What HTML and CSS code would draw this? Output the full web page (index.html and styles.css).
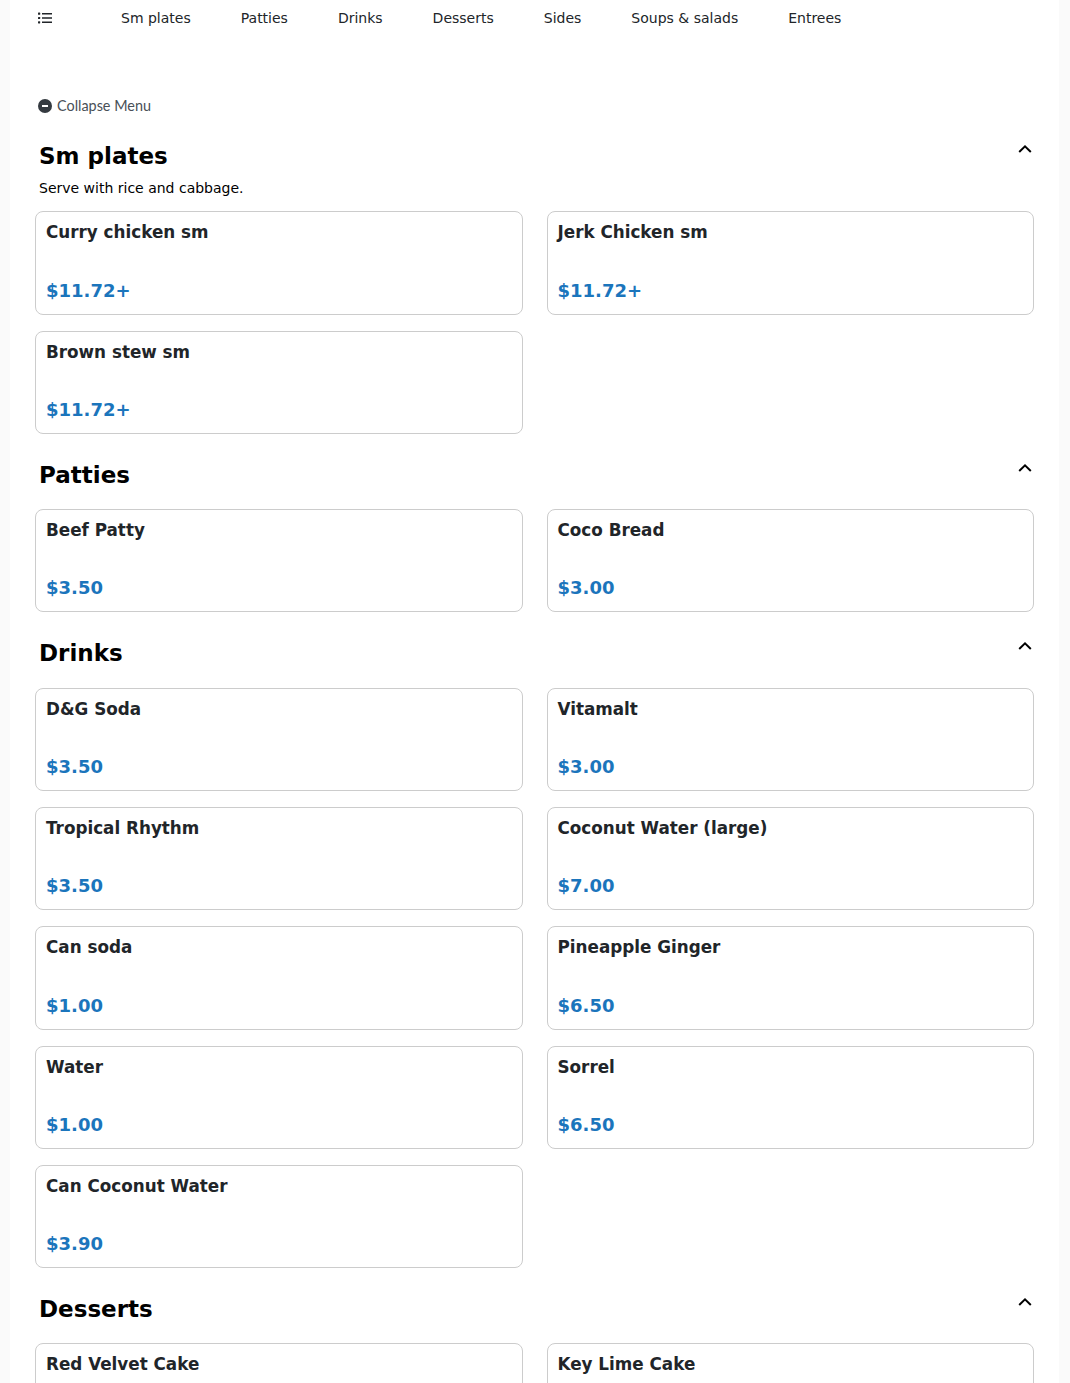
FILE: index.html
```html
<!DOCTYPE html>
<html lang="en">
<head>
<meta charset="utf-8">
<title>Menu</title>
<link rel="stylesheet" href="styles.css">
</head>
<body>
<main class="panel">
  <nav class="nav">
    <button class="nav-toggle" aria-label="Menu list">
      <svg width="14" height="12" viewBox="0 0 14 12" aria-hidden="true"><g fill="#212529"><rect x="0" y="0.6" width="2.2" height="2.2" rx=".6"/><rect x="0" y="4.9" width="2.2" height="2.2" rx=".6"/><rect x="0" y="9.2" width="2.2" height="2.2" rx=".6"/><rect x="4" y="1" width="10" height="1.5"/><rect x="4" y="5.25" width="10" height="1.5"/><rect x="4" y="9.5" width="10" height="1.5"/></g></svg>
    </button>
    <ul class="nav-list">
      <li>Sm plates</li><li>Patties</li><li>Drinks</li><li>Desserts</li><li>Sides</li><li>Soups &amp; salads</li><li>Entrees</li>
    </ul>
  </nav>
  <div class="collapse">
    <svg width="14" height="14" viewBox="0 0 14 14" aria-hidden="true"><circle cx="7" cy="7" r="7" fill="#343a40"/><rect x="4" y="6" width="6" height="2" fill="#fff"/></svg>
    <span class="collapse-label">Collapse Menu</span>
  </div>

  <section class="section">
    <header class="section-head"><h2>Sm plates</h2><svg class="chev" width="14" height="8" viewBox="0 0 14 8" aria-hidden="true"><path d="M1.2 7 7 1.4 12.8 7" fill="none" stroke="#000" stroke-width="2"/></svg></header>
    <p class="section-desc">Serve with rice and cabbage.</p>
    <div class="grid">
      <article class="card"><h3>Curry chicken sm</h3><p>$11.72+</p></article>
      <article class="card"><h3>Jerk Chicken sm</h3><p>$11.72+</p></article>
      <article class="card"><h3>Brown stew sm</h3><p>$11.72+</p></article>
    </div>
  </section>

  <section class="section">
    <header class="section-head"><h2>Patties</h2><svg class="chev" width="14" height="8" viewBox="0 0 14 8" aria-hidden="true"><path d="M1.2 7 7 1.4 12.8 7" fill="none" stroke="#000" stroke-width="2"/></svg></header>
    <div class="grid">
      <article class="card"><h3>Beef Patty</h3><p>$3.50</p></article>
      <article class="card"><h3>Coco Bread</h3><p>$3.00</p></article>
    </div>
  </section>

  <section class="section">
    <header class="section-head"><h2>Drinks</h2><svg class="chev" width="14" height="8" viewBox="0 0 14 8" aria-hidden="true"><path d="M1.2 7 7 1.4 12.8 7" fill="none" stroke="#000" stroke-width="2"/></svg></header>
    <div class="grid">
      <article class="card"><h3>D&amp;G Soda</h3><p>$3.50</p></article>
      <article class="card"><h3>Vitamalt</h3><p>$3.00</p></article>
      <article class="card"><h3>Tropical Rhythm</h3><p>$3.50</p></article>
      <article class="card"><h3>Coconut Water (large)</h3><p>$7.00</p></article>
      <article class="card"><h3>Can soda</h3><p>$1.00</p></article>
      <article class="card"><h3>Pineapple Ginger</h3><p>$6.50</p></article>
      <article class="card"><h3>Water</h3><p>$1.00</p></article>
      <article class="card"><h3>Sorrel</h3><p>$6.50</p></article>
      <article class="card"><h3>Can Coconut Water</h3><p>$3.90</p></article>
    </div>
  </section>

  <section class="section">
    <header class="section-head"><h2>Desserts</h2><svg class="chev" width="14" height="8" viewBox="0 0 14 8" aria-hidden="true"><path d="M1.2 7 7 1.4 12.8 7" fill="none" stroke="#000" stroke-width="2"/></svg></header>
    <div class="grid">
      <article class="card"><h3>Red Velvet Cake</h3></article>
      <article class="card"><h3>Key Lime Cake</h3></article>
    </div>
  </section>
</main>
</body>
</html>
```
FILE: styles.css
```css
* { box-sizing: border-box; }
html, body { margin: 0; height: 1383px; overflow: hidden; background: #fafafa; }
body { font-family: "DejaVu Sans", sans-serif; color: #000; }
.panel { margin: 0 11px 0 10px; height: 1383px; overflow: hidden; background: #fff; padding: 0 25px; }
.nav { display: flex; align-items: center; height: 36px; padding-left: 3px; }
.nav-toggle { display: flex; width: 83px; padding: 0; border: 0; background: none; }
.nav-list { display: flex; gap: 50px; margin: 0; padding: 0; list-style: none; font-size: 14px; color: #212529; }
.collapse { display: flex; align-items: center; gap: 5px; margin: 61px 0 0 3px; height: 18px; font-family: "Lato", sans-serif; font-size: 14.4px; color: #495057; }
.collapse-label { margin-bottom: 2px; }
.section { padding-top: 26px; }
.section-head { display: flex; justify-content: space-between; align-items: flex-start; padding: 0 2px 0 4px; height: 34.35px; }
.section-head h2 { margin: 0; font-size: 23px; line-height: 30px; font-weight: 700; }
.chev { margin-top: 4px; }
.section-desc { margin: 3px 0 0 4px; font-size: 14px; line-height: 20px; }
.grid { display: grid; grid-template-columns: 487.5px 487.5px; column-gap: 24px; row-gap: 16px; margin-top: 15px; }
.section-desc + .grid { margin-top: 13px; }
.card { height: 103.25px; padding: 10px; border: 1px solid #ccc; border-radius: 8px; background: #fff; }
.card h3 { margin: 0; height: 57.25px; font-size: 16.8px; line-height: 20px; font-weight: 700; color: #212529; }
.card p { margin: 0; font-size: 18px; line-height: 22px; font-weight: 700; color: #1b75bc; }
```
